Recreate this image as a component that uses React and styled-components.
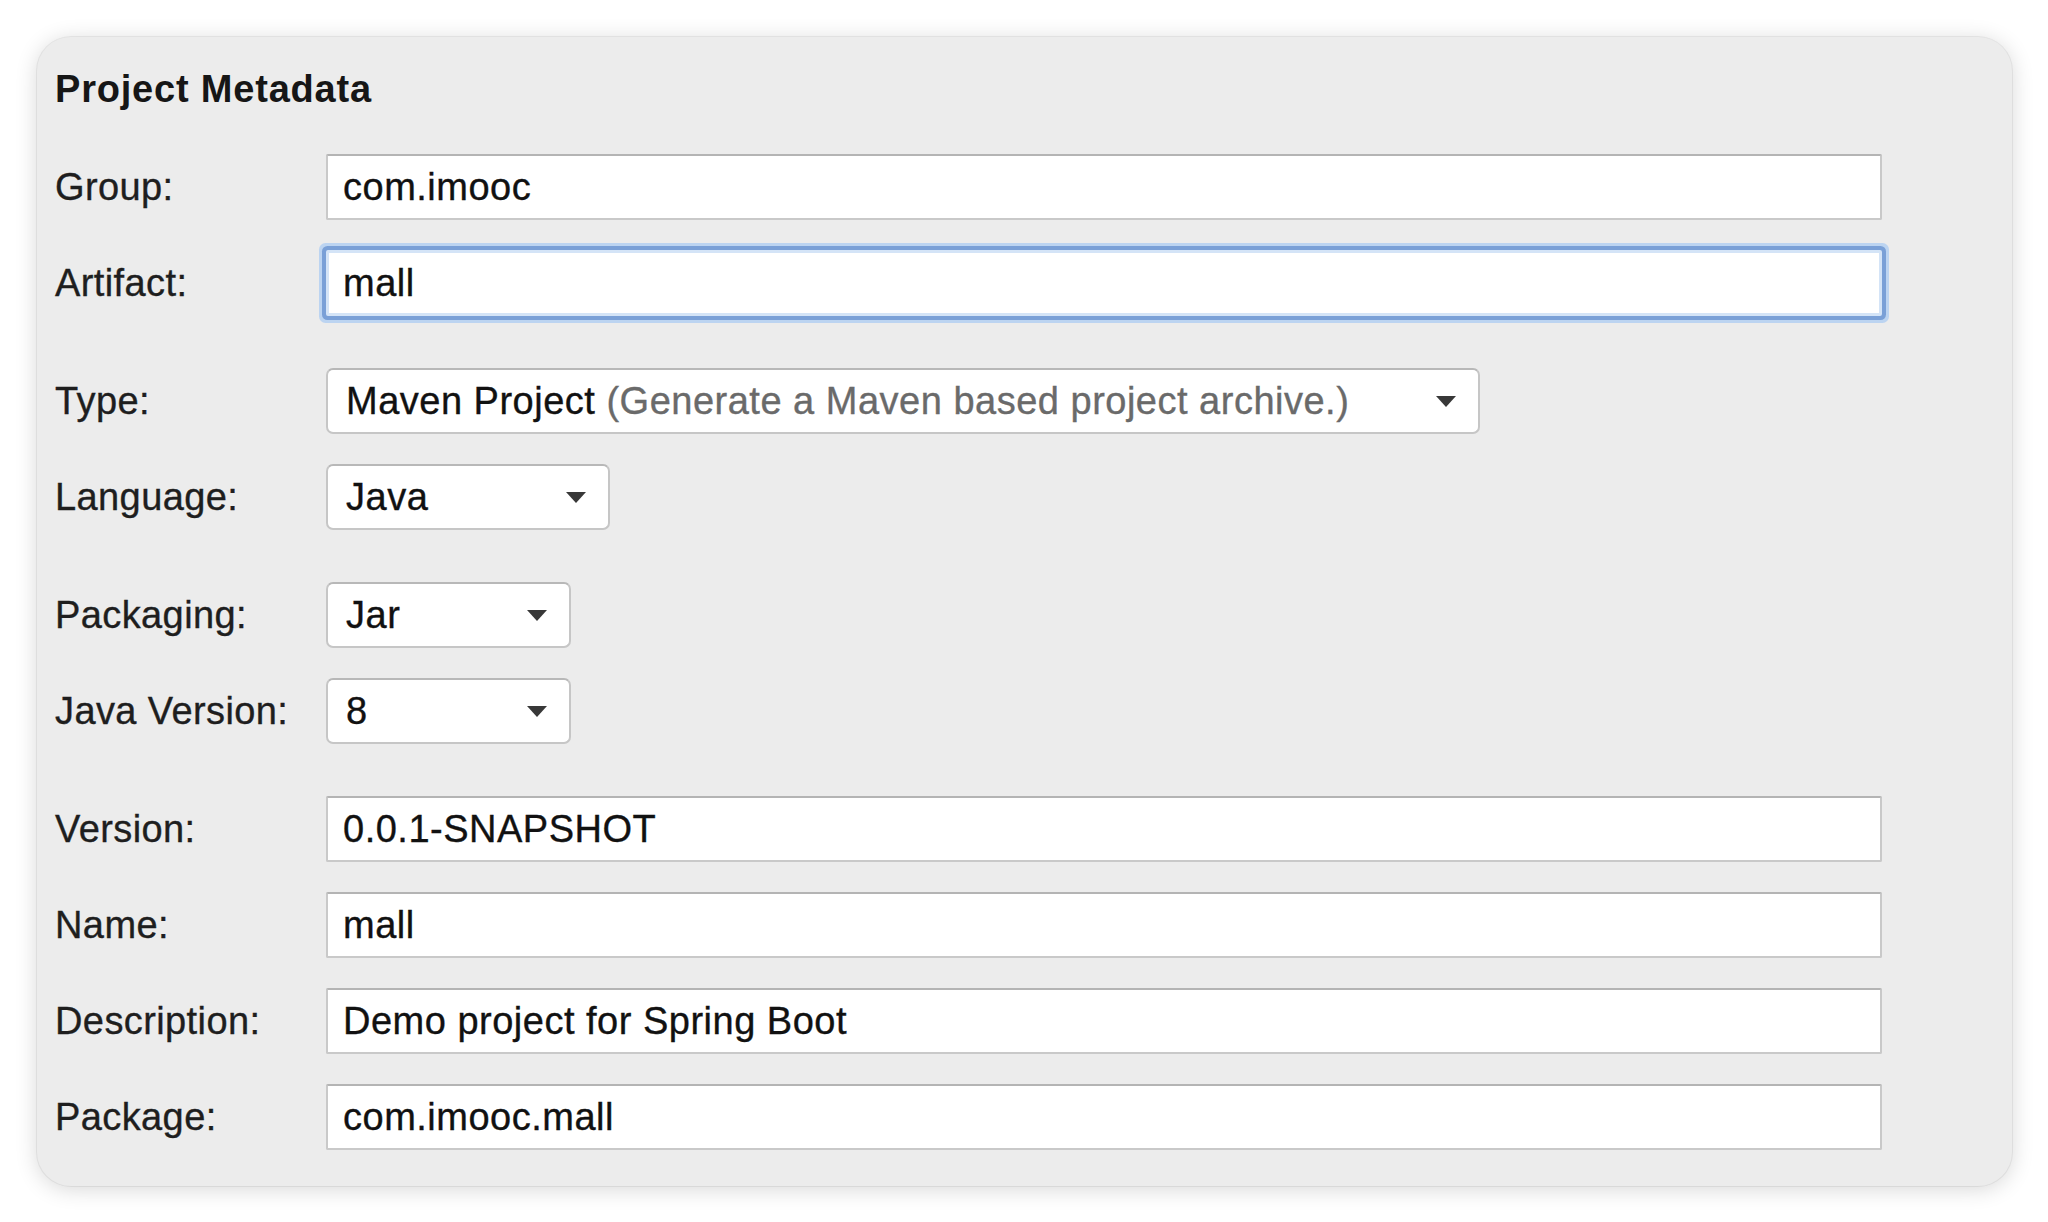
import React from "react";
import styled, { createGlobalStyle, css } from "styled-components";

const GlobalStyle = createGlobalStyle`
  html, body {
    margin: 0;
    padding: 0;
    background: #ffffff;
  }
  body {
    font-family: "Liberation Sans", Arial, sans-serif;
    color: #1c1c1c;
  }
`;

const Page = styled.div`
  width: 2048px;
  height: 1222px;
  box-sizing: border-box;
  padding: 37px 36px 36px 37px;
  background: #ffffff;
`;

const Panel = styled.section`
  box-sizing: border-box;
  width: 1975px;
  height: 1149px;
  padding: 31px 130px 36px 18px;
  background: #ececec;
  border-radius: 34px;
  box-shadow: 0 0 0 1px rgba(0, 0, 0, 0.06), 0 3px 22px rgba(0, 0, 0, 0.16);
`;

const Title = styled.h2`
  margin: 0 0 44px;
  font-size: 38px;
  line-height: 42px;
  font-weight: 700;
  letter-spacing: 0.8px;
  color: #161616;
`;

const Form = styled.div`
  display: flex;
  flex-direction: column;
`;

const Row = styled.div`
  display: grid;
  grid-template-columns: 271px 1fr;
  align-items: center;
  height: 66px;
  margin-top: ${({ $gap }) => $gap}px;
  &:first-child {
    margin-top: 0;
  }
`;

const Label = styled.label`
  font-size: 38px;
  letter-spacing: 0.4px;
  color: #1e1e1e;
  white-space: nowrap;
  -webkit-text-stroke: 0.35px #1e1e1e;
`;

const fieldBase = css`
  box-sizing: border-box;
  height: 66px;
  background: #ffffff;
  font-size: 38px;
  letter-spacing: 0.5px;
  color: #111111;
  display: flex;
  align-items: center;
  white-space: nowrap;
`;

const TextField = styled.div`
  ${fieldBase};
  width: 1556px;
  padding-left: 15px;
  border: 2px solid #c9c9c9;
  border-top-color: #b4b4b4;
  border-radius: 2px;
  -webkit-text-stroke: 0.35px #111111;
  ${({ $focused }) =>
    $focused &&
    css`
      border: 3px solid #d4e4f7;
      padding-left: 14px;
      box-shadow: 0 0 0 4px #7aa0d7, 0 0 0 7px #bcd4f1;
    `}
`;

const Select = styled.div`
  ${fieldBase};
  width: ${({ $width }) => $width}px;
  padding: 0 0 0 18px;
  border: 2px solid #c6c6c6;
  border-top-color: #b8b8b8;
  border-radius: 7px;
  position: relative;
`;

const SelectText = styled.span`
  flex: 1;
  -webkit-text-stroke: 0.35px #111111;
`;

const Hint = styled.span`
  color: #6a6a6a;
  -webkit-text-stroke: 0.35px #6a6a6a;
`;

const Arrow = styled.svg`
  position: absolute;
  right: 21px;
  top: 50%;
  margin-top: -6px;
  width: 22px;
  height: 13px;
`;

const Caret = () => (
  <Arrow viewBox="0 0 22 13">
    <path d="M1 1 L21 1 L11 12 Z" fill="#383838" />
  </Arrow>
);

const rows = [
  { label: "Group:", value: "com.imooc", gap: 0 },
  { label: "Artifact:", value: "mall", gap: 30, focused: true },
  {
    label: "Type:",
    select: 1154,
    value: "Maven Project",
    hint: " (Generate a Maven based project archive.)",
    gap: 52,
  },
  { label: "Language:", select: 284, value: "Java", gap: 30 },
  { label: "Packaging:", select: 245, value: "Jar", gap: 52 },
  { label: "Java Version:", select: 245, value: "8", gap: 30 },
  { label: "Version:", value: "0.0.1-SNAPSHOT", gap: 52 },
  { label: "Name:", value: "mall", gap: 30 },
  { label: "Description:", value: "Demo project for Spring Boot", gap: 30 },
  { label: "Package:", value: "com.imooc.mall", gap: 30 },
];

export default function App() {
  return (
    <>
      <GlobalStyle />
      <Page>
        <Panel>
          <Title>Project Metadata</Title>
          <Form>
            {rows.map((r) => (
              <Row key={r.label} $gap={r.gap}>
                <Label>{r.label}</Label>
                {r.select ? (
                  <Select $width={r.select}>
                    <SelectText>
                      {r.value}
                      {r.hint && <Hint>{r.hint}</Hint>}
                    </SelectText>
                    <Caret />
                  </Select>
                ) : (
                  <TextField $focused={r.focused}>{r.value}</TextField>
                )}
              </Row>
            ))}
          </Form>
        </Panel>
      </Page>
    </>
  );
}
